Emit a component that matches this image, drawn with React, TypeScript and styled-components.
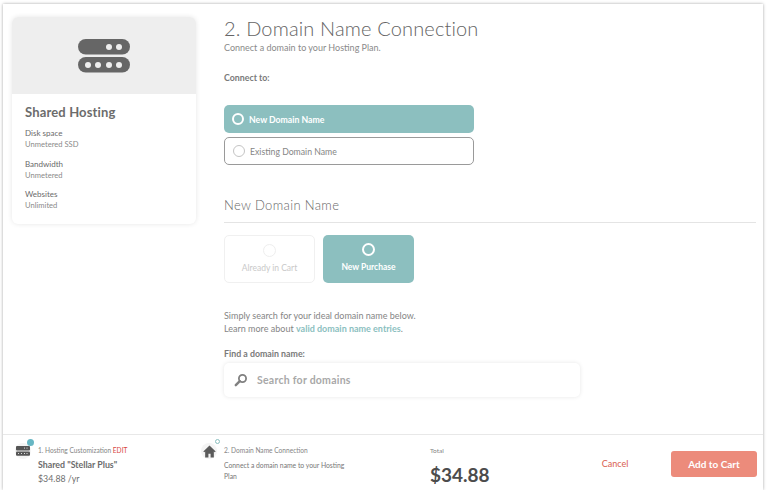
import React from "react";
import styled, { createGlobalStyle } from "styled-components";

const Global = createGlobalStyle`
  html, body { margin: 0; padding: 0; background: #fff; }
  body { font-family: Lato, "Open Sans", sans-serif; color: #6b6b6b; }
  * { box-sizing: border-box; }
`;

const Frame = styled.div`
  width: 760px;
  height: 486px;
  margin: 4px 0 0 3px;
  background: #fff;
  box-shadow: 0 0 3px rgba(0, 0, 0, 0.35);
  display: flex;
  flex-direction: column;
`;
const Main = styled.div`
  flex: 1;
  display: flex;
  min-height: 0;
`;
const Side = styled.aside`
  width: 221px;
  padding: 13px 0 0 9px;
  flex: none;
`;
const PlanCard = styled.div`
  width: 184px;
  height: 207px;
  border-radius: 6px;
  box-shadow: 0 0 5px rgba(0, 0, 0, 0.1);
  overflow: hidden;
  background: #fff;
`;
const PlanMedia = styled.div`
  height: 77px;
  background: #eeeeee;
  display: flex;
  align-items: center;
  justify-content: center;
`;
const PlanBody = styled.div`
  padding: 10px 13px 0;
`;
const PlanTitle = styled.h3`
  margin: 0 0 7px;
  font-size: 13px;
  line-height: 17px;
  font-weight: 700;
  letter-spacing: 0.15px;
  color: #6c6c6c;
`;
const Spec = styled.div`
  font-size: 8px;
  line-height: 11px;
  margin-bottom: 8.5px;
`;
const SpecName = styled.div`
  color: #6a6a6a;
`;
const SpecValue = styled.div`
  color: #8a8a8a;
  font-size: 7.6px;
`;
const Content = styled.main`
  flex: 1;
  padding: 12px 7px 0 0;
`;
const Title = styled.h1`
  margin: 0;
  font-size: 20px;
  line-height: 24px;
  font-weight: 300;
  color: #646464;
  letter-spacing: 0.15px;
`;
const Sub = styled.p`
  margin: 2px 0 0;
  font-size: 9px;
  line-height: 12px;
  font-weight: 400;
  color: #8a8a8a;
`;
const Label = styled.div`
  font-size: 8.8px;
  line-height: 12px;
  font-weight: 700;
  color: #7a7a7a;
`;
const ConnectLabel = styled(Label)`
  margin-top: 18px;
`;
const Options = styled.div`
  width: 250px;
  margin-top: 21px;
  display: flex;
  flex-direction: column;
  gap: 4px;
`;
const Option = styled.div<{ $active?: boolean }>`
  height: 28px;
  border-radius: 5px;
  display: flex;
  align-items: center;
  gap: 5px;
  padding-left: 8px;
  font-size: 8.7px;
  font-weight: ${(p) => (p.$active ? 700 : 400)};
  color: ${(p) => (p.$active ? "#fff" : "#858585")};
  background: ${(p) => (p.$active ? "#8cbfbf" : "#fff")};
  border: ${(p) => (p.$active ? "none" : "1px solid #9a9a9a")};
`;
const Radio = styled.span<{ $active?: boolean; $faint?: boolean; $large?: boolean }>`
  width: ${(p) => (p.$large ? 13 : 12)}px;
  height: ${(p) => (p.$large ? 13 : 12)}px;
  border-radius: 50%;
  flex: none;
  background: ${(p) => (p.$active ? "transparent" : "#fff")};
  border: ${(p) =>
    p.$active ? "2px solid #fff" : p.$faint ? "1px solid #eeeeee" : "1px solid #c4c4c4"};
`;
const Section = styled.h2`
  margin: 31px 0 0;
  padding-bottom: 8px;
  border-bottom: 1px solid #e4e4e4;
  font-size: 13px;
  line-height: 18px;
  font-weight: 300;
  color: #686868;
  letter-spacing: 0.35px;
`;
const Tiles = styled.div`
  display: flex;
  gap: 8px;
  margin-top: 12px;
`;
const Tile = styled.div<{ $active?: boolean }>`
  width: 91px;
  height: 48px;
  padding-top: 8px;
  border-radius: 5px;
  display: flex;
  flex-direction: column;
  align-items: center;
  gap: 6px;
  font-size: 8.5px;
  line-height: 11px;
  font-weight: ${(p) => (p.$active ? 700 : 400)};
  color: ${(p) => (p.$active ? "#fff" : "#c9c9c9")};
  background: ${(p) => (p.$active ? "#8cbfbf" : "#fff")};
  border: ${(p) => (p.$active ? "none" : "1px solid #f0f0f0")};
`;
const Help = styled.p`
  margin: 26px 0 0;
  font-size: 9px;
  line-height: 13px;
  color: #858585;
`;
const HelpLink = styled.a`
  font-weight: 700;
  color: #8cbfbf;
`;
const FindLabel = styled(Label)`
  margin-top: 13px;
`;
const Search = styled.div`
  width: 356px;
  height: 34px;
  margin-top: 3px;
  border-radius: 5px;
  box-shadow: 0 0 4px rgba(0, 0, 0, 0.1);
  display: flex;
  align-items: center;
  gap: 9px;
  padding-left: 10px;
  font-size: 10.5px;
  letter-spacing: 0.25px;
  font-weight: 700;
  color: #a8a8a8;
`;
const Footer = styled.footer`
  height: 56px;
  flex: none;
  border-top: 1px solid #e8e8e8;
  display: flex;
`;
const Step = styled.div<{ $w: number; $inset: number; $gap: number }>`
  width: ${(p) => p.$w}px;
  padding: 8px 0 0 ${(p) => p.$inset}px;
  flex: none;
  display: flex;
  gap: ${(p) => p.$gap}px;
`;
const StepIconWrap = styled.div`
  position: relative;
  width: 16px;
  height: 16px;
  border-radius: 50%;
  background: #f4f4f4;
  flex: none;
  display: flex;
  align-items: center;
  justify-content: center;
`;
const Dot = styled.span<{ $fill?: boolean }>`
  position: absolute;
  top: -4px;
  right: -3px;
  width: ${(p) => (p.$fill ? 7 : 5)}px;
  height: ${(p) => (p.$fill ? 7 : 5)}px;
  border-radius: 50%;
  background: ${(p) => (p.$fill ? "#68b7c4" : "#fff")};
  border: ${(p) => (p.$fill ? "none" : "1px solid #8cbfbf")};
`;
const StepBody = styled.div`
  flex: 1;
`;
const StepTitle = styled.div`
  font-size: 6.6px;
  line-height: 14px;
  color: #858585;
`;
const Edit = styled.span`
  color: #d9473f;
`;
const StepName = styled.div`
  font-size: 8.8px;
  line-height: 12px;
  font-weight: 700;
  margin-top: 2px;
  color: #6c6c6c;
`;
const StepPrice = styled.div`
  font-size: 8.8px;
  line-height: 13px;
  margin-top: 1px;
  color: #6f6f6f;
`;
const StepText = styled.div`
  font-size: 6.8px;
  line-height: 11px;
  margin-top: 3px;
  color: #777;
  width: 122px;
`;
const Total = styled.div`
  width: 150px;
  flex: none;
  padding-top: 11px;
`;
const TotalLabel = styled.div`
  font-size: 6.5px;
  line-height: 9px;
  color: #858585;
`;
const TotalValue = styled.div`
  font-size: 19px;
  line-height: 24px;
  font-weight: 700;
  margin-top: 8px;
  color: #4c4c4c;
`;
const Cancel = styled.button`
  width: 70px;
  height: 56px;
  border: 0;
  background: none;
  padding: 0;
  font: 400 9px Lato, sans-serif;
  color: #d9604f;
`;
const AddCart = styled.button`
  width: 86px;
  height: 26px;
  margin: 16px 0 0 21px;
  border: 0;
  border-radius: 3px;
  background: #ec8b7b;
  color: #fff;
  font: 700 10px Lato, sans-serif;
`;

const ServerIcon = () => (
  <svg width="52" height="34" viewBox="0 0 52 34" fill="#666">
    <rect width="52" height="15.5" y="0" rx="7.7" />
    <rect width="52" height="15.5" y="18" rx="7.7" />
    <g fill="#eee">
      <circle cx="31" cy="8" r="3" />
      <circle cx="41" cy="8" r="3" />
      <circle cx="10" cy="26" r="3" />
      <circle cx="20" cy="26" r="3" />
      <circle cx="31" cy="26" r="3" />
      <circle cx="41" cy="26" r="3" />
    </g>
  </svg>
);
const SmallServer = () => (
  <svg width="14" height="10" viewBox="0 0 14 10" fill="#555">
    <rect width="14" height="4.4" rx="1" />
    <rect width="14" height="4.4" y="5.4" rx="1" />
    <g fill="#ddd">
      <rect x="8" y="1.6" width="1" height="1" />
      <rect x="10.5" y="1.6" width="1" height="1" />
      <rect x="2" y="7" width="1" height="1" />
      <rect x="5" y="7" width="1" height="1" />
      <rect x="8" y="7" width="1" height="1" />
      <rect x="10.5" y="7" width="1" height="1" />
    </g>
  </svg>
);
const HomeIcon = () => (
  <svg width="13" height="13" viewBox="0 0 12 12" fill="#5a5a5a">
    <path d="M6 0.5 0.3 6l.8.8L2 6v5.5h3V8h2v3.5h3V6l.9.8.8-.8z" />
  </svg>
);
const SearchIcon = () => (
  <svg width="14" height="14" viewBox="0 0 14 14" fill="none" stroke="#808080">
    <circle cx="8.5" cy="5.5" r="3.6" strokeWidth="1.8" />
    <path d="M5.8 8.2 1.8 12.2" strokeWidth="2.4" strokeLinecap="round" />
  </svg>
);

export default function App() {
  return (
    <>
      <Global />
      <Frame>
        <Main>
          <Side>
            <PlanCard>
              <PlanMedia>
                <ServerIcon />
              </PlanMedia>
              <PlanBody>
                <PlanTitle>Shared Hosting</PlanTitle>
                <Spec>
                  <SpecName>Disk space</SpecName>
                  <SpecValue>Unmetered SSD</SpecValue>
                </Spec>
                <Spec>
                  <SpecName>Bandwidth</SpecName>
                  <SpecValue>Unmetered</SpecValue>
                </Spec>
                <Spec>
                  <SpecName>Websites</SpecName>
                  <SpecValue>Unlimited</SpecValue>
                </Spec>
              </PlanBody>
            </PlanCard>
          </Side>
          <Content>
            <Title>2. Domain Name Connection</Title>
            <Sub>Connect a domain to your Hosting Plan.</Sub>
            <ConnectLabel>Connect to:</ConnectLabel>
            <Options>
              <Option $active>
                <Radio $active />
                New Domain Name
              </Option>
              <Option>
                <Radio />
                Existing Domain Name
              </Option>
            </Options>
            <Section>New Domain Name</Section>
            <Tiles>
              <Tile>
                <Radio $faint $large />
                Already in Cart
              </Tile>
              <Tile $active>
                <Radio $active $large />
                New Purchase
              </Tile>
            </Tiles>
            <Help>
              Simply search for your ideal domain name below.
              <br />
              Learn more about <HelpLink>valid domain name entries</HelpLink>.
            </Help>
            <FindLabel>Find a domain name:</FindLabel>
            <Search>
              <SearchIcon />
              Search for domains
            </Search>
          </Content>
        </Main>
        <Footer>
          <Step $w={195} $inset={12} $gap={7}>
            <StepIconWrap>
              <SmallServer />
              <Dot $fill />
            </StepIconWrap>
            <StepBody>
              <StepTitle>
                1. Hosting Customization <Edit>EDIT</Edit>
              </StepTitle>
              <StepName>Shared "Stellar Plus"</StepName>
              <StepPrice>$34.88 /yr</StepPrice>
            </StepBody>
          </Step>
          <Step $w={232} $inset={3} $gap={7}>
            <StepIconWrap>
              <HomeIcon />
              <Dot />
            </StepIconWrap>
            <StepBody>
              <StepTitle>2. Domain Name Connection</StepTitle>
              <StepText>Connect a domain name to your Hosting Plan</StepText>
            </StepBody>
          </Step>
          <Total>
            <TotalLabel>Total</TotalLabel>
            <TotalValue>$34.88</TotalValue>
          </Total>
          <Cancel>Cancel</Cancel>
          <AddCart>Add to Cart</AddCart>
        </Footer>
      </Frame>
    </>
  );
}
